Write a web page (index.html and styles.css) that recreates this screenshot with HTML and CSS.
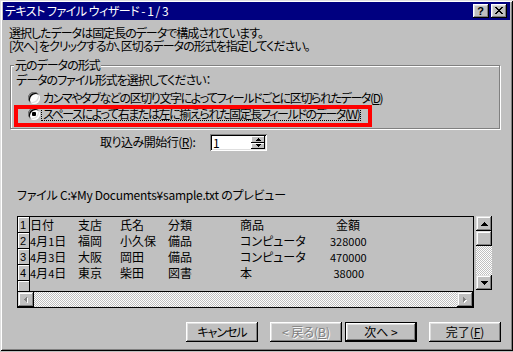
FILE: index.html
```html
<!DOCTYPE html>
<html lang="ja">
<head>
<meta charset="utf-8">
<title>テキスト ファイル ウィザード</title>
<link rel="stylesheet" href="styles.css">
</head>
<body>
<div class="window">
  <div class="titlebar">
    <span class="title">テキスト ファイル ウィザード - 1 / 3</span>
    <div class="tbtns">
      <span class="tbtn help">?</span>
      <span class="tbtn close"><svg width="8" height="7" viewBox="0 0 8 7" shape-rendering="crispEdges"><path d="M0 0h2v1H0zM6 0h2v1H6zM1 1h2v1H1zM5 1h2v1H5zM2 2h4v1H2zM3 3h2v1H3zM2 4h4v1H2zM1 5h2v1H1zM5 5h2v1H5zM0 6h2v1H0zM6 6h2v1H6z" fill="#000"/></svg></span>
    </div>
  </div>
  <div class="content">
    <div class="intro">
      <div>選択したデータは固定長のデータで構成されています。</div>
      <div>[次へ] をクリックするか、区切るデータの形式を指定してください。</div>
    </div>
    <fieldset class="group">
      <legend>元のデータの形式</legend>
      <div class="prompt">データのファイル形式を選択してください：</div>
      <div class="radio-row first"><span class="radio"></span><span class="rlabel">カンマやタブなどの区切り文字によってフィールドごとに区切られたデータ(<u>D</u>)</span></div>
      <div class="radio-row second"><span class="radio checked"></span><span class="rlabel focus">スペースによって右または左に揃えられた固定長フィールドのデータ(<u>W</u>)</span><span class="highlight"></span></div>
    </fieldset>
    <div class="spin-row">
      <span class="spin-label">取り込み開始行(<u>R</u>):</span>
      <div class="spin">
        <span class="spin-value">1</span>
        <div class="spin-btns">
          <span class="sbtn"><svg width="5" height="3" viewBox="0 0 5 3" shape-rendering="crispEdges"><path d="M2 0h1v1h1v1h1v1H0V2h1V1h1z" fill="#000"/></svg></span>
          <span class="sbtn"><svg width="5" height="3" viewBox="0 0 5 3" shape-rendering="crispEdges"><path d="M0 0h5v1H4v1H3v1H2V2H1V1H0z" fill="#000"/></svg></span>
        </div>
      </div>
    </div>
    <div class="preview-label">ファイル C:¥My Documents¥sample.txt のプレビュー</div>
    <div class="preview-row">
      <div class="preview">
        <div class="grid">
          <div class="row"><span class="rh">1</span><span class="c w1">日付</span><span class="c w2">支店</span><span class="c w3">氏名</span><span class="c w4">分類</span><span class="c w5">商品</span><span class="c amt head">金額</span></div>
          <div class="row"><span class="rh">2</span><span class="c w1"><span class="n">4</span>月<span class="n">1</span>日</span><span class="c w2">福岡</span><span class="c w3">小久保</span><span class="c w4">備品</span><span class="c w5">コンピュータ</span><span class="c amt n">328000</span></div>
          <div class="row"><span class="rh">3</span><span class="c w1"><span class="n">4</span>月<span class="n">3</span>日</span><span class="c w2">大阪</span><span class="c w3">岡田</span><span class="c w4">備品</span><span class="c w5">コンピュータ</span><span class="c amt n">470000</span></div>
          <div class="row"><span class="rh">4</span><span class="c w1"><span class="n">4</span>月<span class="n">4</span>日</span><span class="c w2">東京</span><span class="c w3">柴田</span><span class="c w4">図書</span><span class="c w5">本</span><span class="c amt n">38000</span></div>
          <div class="row last"><span class="rh"></span></div>
        </div>
        <div class="hscroll">
          <span class="sb"><svg width="4" height="6" viewBox="0 0 4 6" shape-rendering="crispEdges"><path transform="translate(1 1)" d="M2 0h1v5H2V4H1V3H0V2h1V1h1z" fill="#fff"/><path d="M2 0h1v5H2V4H1V3H0V2h1V1h1z" fill="#808080"/></svg></span>
          <span class="track"></span>
          <span class="sb"><svg width="4" height="6" viewBox="0 0 4 6" shape-rendering="crispEdges"><path transform="translate(1 1)" d="M0 0h1v1h1v1h1v1H2v1H1v1H0z" fill="#fff"/><path d="M0 0h1v1h1v1h1v1H2v1H1v1H0z" fill="#808080"/></svg></span>
        </div>
      </div>
      <div class="vscroll">
        <span class="sb"><svg width="7" height="4" viewBox="0 0 7 4" shape-rendering="crispEdges"><path d="M3 0h1v1h1v1h1v1h1v1H0V3h1V2h1V1h1z" fill="#000"/></svg></span>
        <span class="sb"></span>
        <span class="track"></span>
        <span class="sb"><svg width="7" height="4" viewBox="0 0 7 4" shape-rendering="crispEdges"><path d="M0 0h7v1H6v1H5v1H4v1H3V3H2V2H1V1H0z" fill="#000"/></svg></span>
      </div>
    </div>
    <div class="buttons">
      <span class="btn">キャンセル</span>
      <span class="btn disabled back">&lt; 戻る(<u>B</u>)</span>
      <span class="btn default">次へ &gt;</span>
      <span class="btn finish">完了(<u>F</u>)</span>
    </div>
  </div>
</div>
</body>
</html>
```
FILE: styles.css
```css
* { box-sizing: border-box; }
html, body { margin: 0; padding: 0; }
body {
  background: #c0c0c0;
  font-family: "Noto Sans CJK JP", "Noto Sans", sans-serif;
  font-size: 12px;
  font-feature-settings: "palt";
  letter-spacing: -1px;
  color: #000;
}
.window {
  width: 513px;
  height: 351px;
  background: #c0c0c0;
  padding: 2px 3px 3px 3px;
  box-shadow: inset 1px 1px #dfdfdf, inset -1px -1px #000, inset 2px 2px #fff, inset -2px -2px #808080;
  display: flex;
  flex-direction: column;
}
.titlebar {
  height: 18px;
  flex: none;
  background: #000080;
  color: #fff;
  display: flex;
  align-items: center;
  justify-content: space-between;
  padding: 0 3px 0 2px;
}
.title { line-height: 18px; white-space: nowrap; letter-spacing: -0.5px; }
.tbtns { display: flex; gap: 2px; }
.tbtn {
  width: 16px;
  height: 14px;
  background: #c0c0c0;
  box-shadow: inset -1px -1px #000, inset 1px 1px #fff, inset -2px -2px #808080, inset 2px 2px #dfdfdf;
  display: flex;
  align-items: center;
  justify-content: center;
  color: #000;
  letter-spacing: 0;
}
.help { font: bold 11px/14px "Liberation Sans", sans-serif; padding-right: 1px; }
.close svg { margin: 0 1px 1px 0; }
.content {
  flex: 1;
  display: flex;
  flex-direction: column;
  align-items: flex-start;
}
.intro { margin: 6px 0 0 6px; line-height: 13px; white-space: nowrap; }
.group {
  margin: 6px 0 0 7px;
  width: 490px;
  min-inline-size: 0;
  padding: 0 0 7px 5px;
  border: 1px solid #808080;
  box-shadow: 1px 1px 0 #fff, inset 1px 1px 0 #fff;
}
.group legend {
  padding: 0 1px;
  margin-left: -2px;
  line-height: 14px;
  background: #c0c0c0;
}
.prompt { margin-top: 1px; line-height: 13px; white-space: nowrap; }
.radio-row {
  display: flex;
  align-items: center;
  height: 14px;
  position: relative;
}
.radio-row.first { margin-top: 5px; }
.radio-row.second { margin-top: 2px; }
.radio {
  flex: none;
  width: 12px;
  height: 12px;
  margin-left: 12px;
  border-radius: 50%;
  background: #fff;
  position: relative;
  box-shadow: inset 1px 1px #808080, inset -1px -1px #fff, inset 2px 2px #000, inset -2px -2px #dfdfdf;
}
.radio.checked::after {
  content: "";
  position: absolute;
  left: 4px;
  top: 4px;
  width: 4px;
  height: 4px;
  border-radius: 1px;
  background: #000;
}
.rlabel {
  margin-left: 1px;
  padding: 0 1px;
  height: 14px;
  border: 1px solid transparent;
  line-height: 12px;
  white-space: nowrap;
  letter-spacing: -1.4px;
}
.rlabel.focus { border: 1px dotted #000; }
.highlight {
  position: absolute;
  left: -2px;
  top: -2px;
  width: 358px;
  height: 22px;
  border: 4px solid #ff0000;
  pointer-events: none;
}
.spin-row {
  display: flex;
  align-items: flex-start;
  margin: 5px 0 0 97px;
}
.spin-label { width: 110px; margin-top: 1px; line-height: 13px; white-space: nowrap; letter-spacing: -0.5px; }
.spin {
  width: 57px;
  height: 17px;
  background: #fff;
  padding: 2px;
  display: flex;
  box-shadow: inset 1px 1px #808080, inset -1px -1px #fff, inset 2px 2px #000, inset -2px -2px #dfdfdf;
}
.spin-value { flex: 1; line-height: 13px; padding-left: 1px; letter-spacing: 0; }
.spin-btns { width: 14px; display: flex; flex-direction: column; }
.sbtn {
  flex: 1;
  background: #c0c0c0;
  box-shadow: inset -1px -1px #000, inset 1px 1px #fff;
  display: flex;
  align-items: center;
  justify-content: center;
}
.preview-label { margin: 37px 0 0 14px; line-height: 13px; white-space: nowrap; letter-spacing: -0.25px; }
.preview-row {
  display: flex;
  align-items: flex-start;
  margin: 15px 0 0 14px;
}
.preview {
  width: 457px;
  border: 1px solid #000;
  display: flex;
  flex-direction: column;
  letter-spacing: 0;
}
.grid { border-bottom: 1px solid #000; }
.row { display: flex; height: 16px; }
.row.last { height: 10px; }
.rh {
  flex: none;
  width: 12px;
  border-right: 1px solid #000;
  border-bottom: 1px solid #000;
  box-shadow: inset 1px 1px #fff;
  font: 11px/1 "Liberation Sans", sans-serif;
  display: flex;
  align-items: flex-end;
  padding: 0 0 1px 2px;
}
.row.last .rh { border-bottom: none; }
.c { flex: none; line-height: 16px; white-space: nowrap; }
.w1 { width: 48px; }
.w2 { width: 42px; }
.w3 { width: 48px; }
.w4 { width: 72px; }
.w5 { width: 90px; }
.amt { width: 34px; text-align: right; }
.amt.head { width: 30px; }
.n { font-size: 11px; }
.sb {
  flex: none;
  width: 16px;
  height: 15px;
  background: #c0c0c0;
  box-shadow: inset -1px -1px #000, inset 1px 1px #dfdfdf, inset -2px -2px #808080, inset 2px 2px #fff;
  display: flex;
  align-items: center;
  justify-content: center;
}
.track {
  flex: 1;
  background-color: #c0c0c0;
  background-image: conic-gradient(#fff 25%, #c0c0c0 0 50%, #fff 0 75%, #c0c0c0 0);
  background-size: 2px 2px;
}
.hscroll { display: flex; height: 15px; }
.vscroll {
  margin-left: 2px;
  width: 16px;
  height: 74px;
  display: flex;
  flex-direction: column;
}
.buttons {
  align-self: stretch;
  display: flex;
  justify-content: flex-end;
  margin: 14px 9px 0 0;
}
.btn {
  width: 72px;
  height: 20px;
  line-height: 20px;
  text-align: center;
  background: #c0c0c0;
  box-shadow: inset -1px -1px #000, inset 1px 1px #fff, inset -2px -2px #808080, inset 2px 2px #dfdfdf;
  white-space: nowrap;
}
.btn.back { margin-left: 12px; letter-spacing: 0; }
.btn.default {
  margin-left: 3px;
  border: 1px solid #000;
  line-height: 18px;
  letter-spacing: 0;
}
.btn.finish { margin-left: 12px; letter-spacing: 0; }
.btn.disabled { color: #808080; text-shadow: 1px 1px 0 #fff; }
```
